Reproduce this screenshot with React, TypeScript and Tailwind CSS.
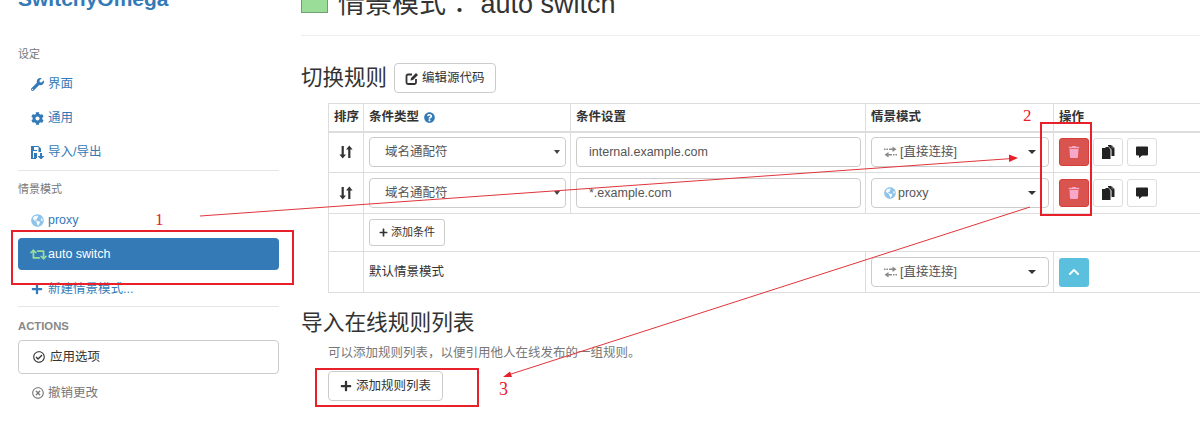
import React from "react";
import {
  FaWrench,
  FaCog,
  FaGlobeAmericas,
  FaRetweet,
  FaPlus,
  FaTrash,
  FaChevronUp,
  FaRegCheckCircle,
  FaRegTimesCircle,
  FaQuestionCircle,
} from "react-icons/fa";

const font = "font-['Liberation_Sans','Noto_Sans_CJK_SC',sans-serif]";

function ImportExportIcon() {
  return (
    <svg width="14" height="14" viewBox="0 0 14 14" fill="currentColor">
      <path d="M0 1h7.500L10 3.500V7H7.500V2H3v3h3v1H2v7h3v1H0z" />
      <path d="M9 8h2v3h2.500L10 14.500 6.500 11H9z" />
      <path d="M3 8h3v5H3z" />
    </svg>
  );
}

function EditIcon() {
  return (
    <svg width="13" height="13" viewBox="0 0 13 13" fill="none" stroke="#333">
      <path d="M7 2.500H3A1.500 1.500 0 0 0 1.500 4v6.500A1.500 1.500 0 0 0 3 12h6.500a1.500 1.500 0 0 0 1.500-1.500V7" strokeWidth="1.800" />
      <path d="M5.500 8.500 6 6l5-5 2 2-5 5z" fill="#333" stroke="none" />
    </svg>
  );
}

function SortIcon() {
  return (
    <svg width="14" height="14" viewBox="0 0 14 14" fill="#333">
      <path d="M2.600 1h2.200v8.500H7L3.700 13.500.4 9.500h2.200z" />
      <path d="M9.200 13V4.500H7L10.300.5l3.300 4h-2.200V13z" />
    </svg>
  );
}

function ExchangeIcon() {
  return (
    <svg width="13" height="12" viewBox="0 0 13 12" fill="#8a8a8a">
      <path d="M0 2.500h1.500V4H0zM2.500 2.500H4V4H2.500zM5 2.500h3.500V.5l4 2.700-4 2.800V4H5z" />
      <path d="M13 8h-1.500v1.500H13zM10.500 8H9v1.500h1.500zM8 8H4.500V6l-4 2.700 4 2.800V9.500H8z" />
    </svg>
  );
}

function CopyIcon() {
  return (
    <svg width="13" height="14" viewBox="0 0 13 14" fill="#222">
      <path d="M0 3h3.500V2h3l2 2.500V14H0z" />
      <path d="M6 0h3l3.500 3.500V11H9.500V4.500L6 1z" />
      <path d="M9.500 0 13 3.200H9.500z" fill="#666" />
    </svg>
  );
}

function CommentIcon() {
  return (
    <svg width="12" height="12" viewBox="0 0 12 12" fill="#222">
      <path d="M1 .5h10a1 1 0 0 1 1 1v7a1 1 0 0 1-1 1H6l-3 2.500V9.500H1a1 1 0 0 1-1-1v-7a1 1 0 0 1 1-1z" />
    </svg>
  );
}

function NavItem({ icon, label }: { icon: React.ReactNode; label: string }) {
  return (
    <div className="flex h-[34px] items-center pl-[13px] text-[#337ab7]">
      <span className="flex w-[17px] items-center text-[13px]">{icon}</span>
      <span>{label}</span>
    </div>
  );
}

function Caret({ small }: { small?: boolean }) {
  return (
    <span
      className={
        small
          ? "h-0 w-0 border-x-[3px] border-t-[4px] border-x-transparent border-t-[#444]"
          : "h-0 w-0 border-x-[4px] border-t-[4px] border-x-transparent border-t-[#333]"
      }
    />
  );
}

function TypeSelect() {
  return (
    <div className="flex h-[30px] w-[197px] items-center justify-between rounded-[4px] border border-[#ccc] bg-white pl-[15px] pr-[5px] text-[#555]">
      <span>域名通配符</span>
      <Caret small />
    </div>
  );
}

function ModeSelect({ children }: { children: React.ReactNode }) {
  return (
    <div className="flex h-[30px] w-[178px] items-center justify-between rounded-[4px] border border-[#ccc] bg-white pl-[12px] pr-[12px] text-[#555]">
      <span className="flex items-center gap-[2px]">{children}</span>
      <Caret />
    </div>
  );
}

function Direct() {
  return (
    <>
      <span className="flex w-[14px]"><ExchangeIcon /></span>
      <span>[直接连接]</span>
    </>
  );
}

function Proxy() {
  return (
    <>
      <FaGlobeAmericas className="text-[12px] text-[#8ec4ea]" />
      <span>proxy</span>
    </>
  );
}

function SquareBtn({ children, className }: { children: React.ReactNode; className: string }) {
  return (
    <div className={`flex h-[28px] w-[30px] items-center justify-center rounded-[3px] border ${className}`}>{children}</div>
  );
}

function Actions() {
  return (
    <div className="flex gap-[4px]">
      <SquareBtn className="border-[#d43f3a] bg-[#d9534f]"><FaTrash className="text-[12px] text-[#f7a8c8]" /></SquareBtn>
      <SquareBtn className="border-[#ddd] bg-white"><CopyIcon /></SquareBtn>
      <SquareBtn className="border-[#ddd] bg-white"><CommentIcon /></SquareBtn>
    </div>
  );
}

function RuleRow({ value, mode }: { value: string; mode: React.ReactNode }) {
  return (
    <tr className="h-[41px]">
      <td className="border border-[#ddd] text-center"><span className="flex justify-center"><SortIcon /></span></td>
      <td className="border border-[#ddd] px-[5px]"><TypeSelect /></td>
      <td className="border border-[#ddd] px-[5px]">
        <div className="flex h-[30px] w-[285px] items-center rounded-[4px] border border-[#ccc] bg-white pl-[12px] text-[#555]">{value}</div>
      </td>
      <td className="border border-[#ddd] px-[5px]"><ModeSelect>{mode}</ModeSelect></td>
      <td className="border border-[#ddd] px-[5px]"><Actions /></td>
    </tr>
  );
}

export default function App() {
  return (
    <div className={`relative flex h-[430px] w-[1200px] overflow-hidden bg-white text-[12.5px] text-[#333] ${font}`}>
      <aside className="-mt-[14px] ml-[18px] w-[261px] shrink-0">
        <div className="flex h-[26px] items-center text-[21px] font-bold text-[#337ab7]">SwitchyOmega</div>
        <div className="mt-[33px] flex h-[18px] items-center text-[11px] text-[#777]">设定</div>
        <div className="mt-[4px]">
          <NavItem icon={<FaWrench />} label="界面" />
          <NavItem icon={<FaCog />} label="通用" />
          <NavItem icon={<ImportExportIcon />} label="导入/导出" />
        </div>
        <div className="mt-[1px] border-t border-[#e5e5e5]" />
        <div className="mt-[9px] flex h-[18px] items-center text-[11px] text-[#777]">情景模式</div>
        <div className="mt-[5px]">
          <NavItem icon={<FaGlobeAmericas className="text-[#8ec4ea]" />} label="proxy" />
        </div>
        <div className="mt-[1px] flex h-[32px] items-center rounded-[4px] bg-[#337ab7] pl-[12px] text-white">
          <span className="flex w-[18px] items-center text-[17px] text-[#99dd99]"><FaRetweet /></span>
          <span>auto switch</span>
        </div>
        <div className="mt-[2px]">
          <NavItem icon={<FaPlus className="text-[12px]" />} label="新建情景模式..." />
        </div>
        <div className="border-t border-[#e5e5e5]" />
        <div className="mt-[10px] flex h-[18px] items-center text-[11.300px] font-bold text-[#888]">ACTIONS</div>
        <div className="mt-[5px] flex h-[34px] items-center rounded-[4px] border border-[#ccc] bg-white pl-[14px] text-[#333]">
          <span className="flex w-[17px] items-center text-[12px]"><FaRegCheckCircle /></span>
          <span>应用选项</span>
        </div>
        <div className="flex h-[38px] items-center pl-[14px] text-[#777]">
          <span className="flex w-[16px] items-center text-[12px]"><FaRegTimesCircle /></span>
          <span>撤销更改</span>
        </div>
      </aside>

      <main className="-mt-[12px] ml-[22px] min-w-0 flex-1 overflow-hidden">
        <div className="flex h-[30px] items-center">
          <span className="mb-[5px] h-[25px] w-[27px] border border-[#6f9f6f] bg-[#99dd99]" />
          <span className="ml-[10px] whitespace-pre text-[27px] text-[#333]">
            情景模式<span className="font-['Noto_Sans_CJK_TC',sans-serif]">：</span> auto switch
          </span>
        </div>
        <div className="mt-[17px] border-b border-[#eee]" />

        <div className="mt-[27px] flex h-[30px] items-center">
          <h3 className="text-[21.500px] text-[#333]">切换规则</h3>
          <div className="ml-[7px] flex h-[30px] w-[102px] items-center rounded-[4px] border border-[#ccc] bg-white pl-[10px]">
            <span className="mr-[4px] flex"><EditIcon /></span>
            <span>编辑源代码</span>
          </div>
        </div>

        <div className="mt-[10px] ml-[27px]">
          <table className="w-[920px] table-fixed border-collapse text-[12.500px]">
            <colgroup>
              <col className="w-[35px]" />
              <col className="w-[207px]" />
              <col className="w-[295px]" />
              <col className="w-[188px]" />
              <col />
            </colgroup>
            <thead>
              <tr className="h-[28px] font-bold">
                <th className="whitespace-nowrap border border-b-2 border-[#ddd] pl-[5px] text-left font-bold">排序</th>
                <th className="border border-b-2 border-[#ddd] px-[5px] text-left font-bold">
                  <span className="flex items-center gap-[5px]">条件类型<FaQuestionCircle className="text-[11px] text-[#337ab7]" /></span>
                </th>
                <th className="border border-b-2 border-[#ddd] px-[5px] text-left font-bold">条件设置</th>
                <th className="border border-b-2 border-[#ddd] px-[5px] text-left font-bold">情景模式</th>
                <th className="border border-b-2 border-[#ddd] px-[5px] text-left font-bold">操作</th>
              </tr>
            </thead>
            <tbody>
              <RuleRow value="internal.example.com" mode={<Direct />} />
              <RuleRow value="*.example.com" mode={<Proxy />} />
              <tr className="h-[38px]">
                <td className="border border-[#ddd]" />
                <td className="border-y border-l border-[#ddd] px-[5px]">
                  <div className="flex h-[27px] w-[76px] items-center justify-center rounded-[3px] border border-[#ccc] bg-white text-[11px]">
                    <FaPlus className="mr-[3px] text-[9px]" />添加条件
                  </div>
                </td>
                <td className="border-y border-[#ddd]" />
                <td className="border-y border-[#ddd]" />
                <td className="border-y border-[#ddd]" />
              </tr>
              <tr className="h-[41px]">
                <td className="border border-[#ddd]" />
                <td className="border-y border-l border-[#ddd] px-[5px]">默认情景模式</td>
                <td className="border-y border-r border-[#ddd]" />
                <td className="border border-[#ddd] px-[5px]"><ModeSelect><Direct /></ModeSelect></td>
                <td className="border border-[#ddd] px-[5px]">
                  <div className="flex h-[29px] w-[30px] items-center justify-center rounded-[3px] bg-[#5bc0de]">
                    <FaChevronUp className="text-[12px] text-white" />
                  </div>
                </td>
              </tr>
            </tbody>
          </table>
        </div>

        <h3 className="mt-[15px] flex h-[30px] items-center text-[21.700px] text-[#333]">导入在线规则列表</h3>
        <p className="mt-[6px] ml-[27px] flex h-[18px] items-center text-[12.500px] text-[#777]">可以添加规则列表，以便引用他人在线发布的一组规则。</p>
        <div className="mt-[9px] ml-[27px] flex h-[30px] w-[115px] items-center justify-center rounded-[4px] border border-[#ccc] bg-white">
          <FaPlus className="mr-[4px] text-[12px]" />添加规则列表
        </div>
      </main>

      <div className="absolute left-[11px] top-[230px] h-[55px] w-[283px] border-2 border-[#e8202a]" />
      <div className="absolute left-[1040px] top-[122px] h-[94px] w-[52px] border-2 border-[#e8202a]" />
      <div className="absolute left-[315px] top-[368px] h-[39px] w-[164px] border-2 border-[#e8202a]" />
      <svg className="pointer-events-none absolute left-0 top-0" width="1200" height="430">
        <line x1="200" y1="216" x2="1012" y2="158.500" stroke="#e0353b" strokeWidth="1" />
        <polygon points="1018,158 1009,154.500 1009,162" fill="#e8202a" />
        <line x1="1030" y1="207" x2="508" y2="375" stroke="#e0353b" strokeWidth="1" />
        <polygon points="503,377 510,371.500 512,377" fill="#e8202a" />
      </svg>
      <span className="absolute left-[155px] top-[207px] font-['Liberation_Serif',serif] text-[17px] text-[#e8202a]">1</span>
      <span className="absolute left-[1023px] top-[103px] font-['Liberation_Serif',serif] text-[17px] text-[#e8202a]">2</span>
      <span className="absolute left-[499px] top-[376px] font-['Liberation_Serif',serif] text-[18px] text-[#e8202a]">3</span>
    </div>
  );
}
